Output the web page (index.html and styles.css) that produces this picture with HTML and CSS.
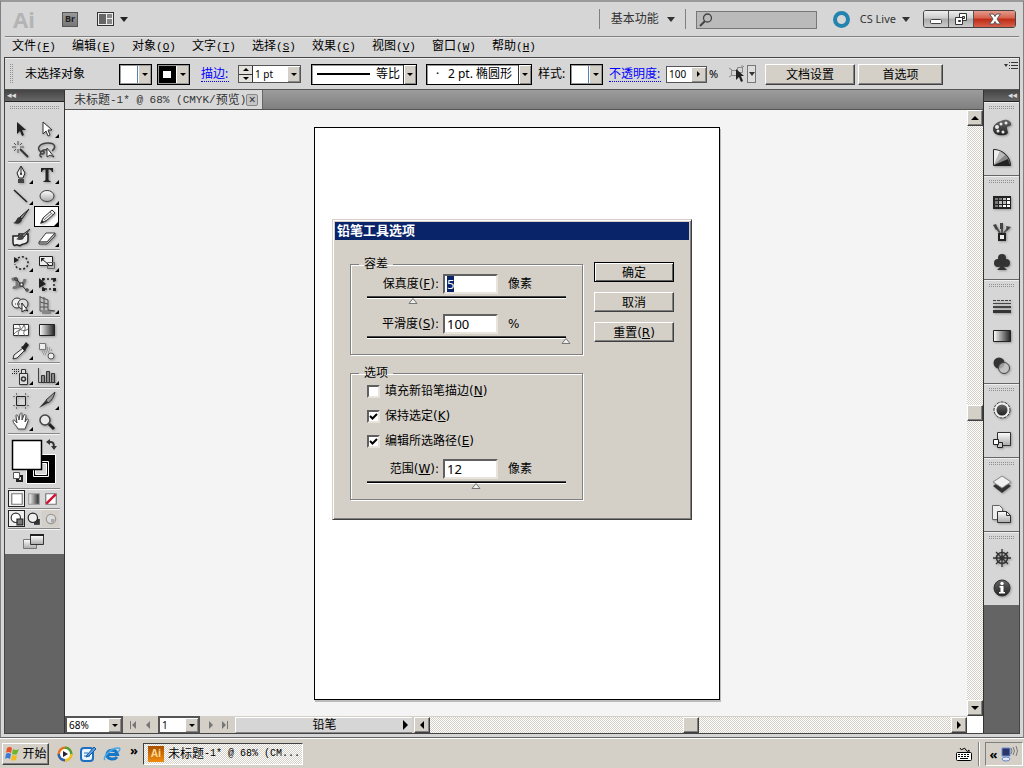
FILE: index.html
```html
<!DOCTYPE html>
<html lang="zh-CN">
<head>
    <meta charset="UTF-8">
    <meta name="viewport" content="width=device-width, initial-scale=1.0">
    <title>未标题-1* @ 68% (CMYK/预览)</title>
    <link rel="stylesheet" href="styles.css">
</head>
<body>

<!-- Shared gradients -->
<svg class="defs" width="0" height="0">
    <defs>
        <linearGradient id="fade" x1="0" y1="0" x2="1" y2="0"><stop offset="0" stop-color="#fff"/><stop offset="1" stop-color="#222"/></linearGradient>
        <linearGradient id="fadeDown" x1="0" y1="0" x2="0" y2="1"><stop offset="0" stop-color="#fff"/><stop offset="1" stop-color="#aaa"/></linearGradient>
        <linearGradient id="dark" x1="0" y1="0" x2="0" y2="1"><stop offset="0" stop-color="#666"/><stop offset="1" stop-color="#222"/></linearGradient>
    </defs>
</svg>

<div class="window">
    <header class="app-bar">
        <span class="app-logo">Ai</span>
        <button class="bridge-btn" type="button">Br</button>
        <button class="arrange-btn" type="button" aria-label="排列文档">
            <svg width="32" height="16" viewBox="0 0 32 16"><rect x="1.500" y="1.500" width="16" height="13" fill="#eee" stroke="#333"/><rect x="3" y="3" width="7" height="10" fill="#666"/><rect x="11" y="3" width="5" height="4" fill="#888"/><rect x="11" y="8" width="5" height="5" fill="#888"/><path d="M24 6h8l-4 5z" fill="#222"/></svg>
        </button>
        <div class="app-right">
            <button class="workspace-btn" type="button">基本功能 <i class="caret"></i></button>
            <label class="search">
                <svg width="14" height="14" viewBox="0 0 14 14"><circle cx="8.500" cy="5" r="4" fill="none" stroke="#444" stroke-width="1.300"/><path d="M6 8L1 13" stroke="#444" stroke-width="2"/></svg>
                <input type="text" aria-label="搜索">
            </label>
            <span class="live-ring"></span>
            <button class="live-btn" type="button">CS Live <i class="caret"></i></button>
            <div class="window-btns">
                <button type="button" aria-label="最小化"><svg width="14" height="14" viewBox="0 0 14 14"><rect x="1.500" y="7.500" width="11" height="4" rx="1" fill="#fff" stroke="#444"/></svg></button>
                <button type="button" aria-label="还原"><svg width="14" height="14" viewBox="0 0 14 14"><path d="M5.500 1.500h7v7h-7z" fill="#fff" stroke="#333"/><path d="M8.500 4.500h2v2h-2z" fill="#aaa" stroke="#333"/><path d="M1.500 5.500h7v7h-7z" fill="#fff" stroke="#333"/><path d="M4.500 8.500h2v1h-2z" fill="#aaa" stroke="#333"/></svg></button>
                <button class="close" type="button" aria-label="关闭"><svg width="14" height="14" viewBox="0 0 14 14"><path d="M1.500 2h4l1.500 2.500 1.500-2.500h4l-3.500 5 3.500 5h-4l-1.500-2.500-1.500 2.500h-4l3.500-5z" fill="#fff" stroke="#555"/></svg></button>
            </div>
        </div>
    </header>

    <nav class="menu">
        <a href="#">文件<span>(<u>F</u>)</span></a>
        <a href="#">编辑<span>(<u>E</u>)</span></a>
        <a href="#">对象<span>(<u>O</u>)</span></a>
        <a href="#">文字<span>(<u>T</u>)</span></a>
        <a href="#">选择<span>(<u>S</u>)</span></a>
        <a href="#">效果<span>(<u>C</u>)</span></a>
        <a href="#">视图<span>(<u>V</u>)</span></a>
        <a href="#">窗口<span>(<u>W</u>)</span></a>
        <a href="#">帮助<span>(<u>H</u>)</span></a>
    </nav>

    <div class="shell">
        <!-- Control bar -->
        <div class="control-bar">
            <span class="grip-v"></span>
            <span class="selection">未选择对象</span>
            <button class="swatch" type="button" aria-label="填色"><span class="chip"></span><span class="drop"></span></button>
            <button class="swatch" type="button" aria-label="描边颜色"><span class="chip black"></span><span class="drop"></span></button>
            <a class="panel-link stroke-link" href="#">描边:</a>
            <div class="weight">
                <div class="spin"><button type="button" aria-label="增加"><i class="up"></i></button><button type="button" aria-label="减少"><i class="down"></i></button></div>
                <input type="text" value="1 pt" aria-label="描边粗细">
                <button class="drop" type="button" aria-label="粗细列表"></button>
            </div>
            <button class="combo profile" type="button"><span class="line"></span><span>等比</span><span class="drop"></span></button>
            <button class="combo brush" type="button"><span class="dot">·</span><span>2 pt. 椭圆形</span><span class="drop"></span></button>
            <span class="style-label">样式:</span>
            <button class="swatch" type="button" aria-label="样式"><span class="chip"></span><span class="drop"></span></button>
            <a class="panel-link opacity-link" href="#">不透明度:</a>
            <div class="opacity">
                <input type="text" value="100" aria-label="不透明度">
                <button class="drop side" type="button" aria-label="不透明度滑块"></button>
            </div>
            <span class="percent">%</span>
            <button class="similar" type="button" aria-label="选择类似的对象">
                <svg width="16" height="18" viewBox="0 0 16 18"><path d="M0 3l3 2m-3 7l3-2M13 0v2M15 1l-2 2M8.500 2.500h5v5h-5zM2.500 5.500h5v5h-5z" fill="none" stroke="#888"/><path d="M7 4v11l3-3 2 5 2-1-2-5h3z" fill="#222"/></svg>
            </button>
            <button class="similar-drop" type="button" aria-label="更多"></button>
            <button class="push setup" type="button">文档设置</button>
            <button class="push prefs" type="button">首选项</button>
            <button class="bar-menu" type="button" aria-label="面板菜单">
                <svg width="14" height="10" viewBox="0 0 14 10"><path d="M0 3h4l-2 3z" fill="#333"/><path d="M5 1.500h1m1 0h7M5 4.500h1m1 0h7M5 7.500h1m1 0h7" stroke="#333"/></svg>
            </button>
        </div>

        <div class="workspace">
            <!-- Tools -->
            <aside class="tools">
                <div class="panel-head">◂◂</div>
                <div class="tools-panel">
                    <div class="grip"></div>
                    <div class="tool-group">
                        <button type="button" aria-label="选择"><svg viewBox="0 0 20 20"><path d="M6 3v12l3-3 2 5 2-1-2-5h4z" fill="#222"/></svg></button>
                        <button class="more" type="button" aria-label="直接选择"><svg viewBox="0 0 20 20"><path d="M6 3v12l3-3 2 5 2-1-2-5h4z" fill="#fff" stroke="#333"/></svg></button>
                        <button type="button" aria-label="魔棒"><svg viewBox="0 0 20 20"><path d="M9 9l8 8" stroke="#333" stroke-width="2"/><path d="M7 1v4M7 9v4M1 7h4M9 7h4M3 3l2 2M9 5l2-2M3 11l2-2" stroke="#555"/></svg></button>
                        <button type="button" aria-label="套索"><svg viewBox="0 0 20 20"><path d="M4 12c-6-4 0-9 7-9 8 0 8 5 4 8M4 12c3-3 5 2 1 2-3 0-1-5 5-4M4 13c-2 2-1 4 1 4" fill="none" stroke="#444" stroke-width="1.500"/><path d="M10 8v9l3-2 4 2z" fill="#fff" stroke="#333"/></svg></button>
                    </div>
                    <div class="tool-group">
                        <button class="more" type="button" aria-label="钢笔"><svg viewBox="0 0 20 20"><path d="M10 1l4 7-2 5h-4l-2-5z" fill="#eee" stroke="#222"/><path d="M10 2v7" stroke="#222"/><circle cx="10" cy="9" r="1" fill="#222"/><path d="M7 14h6v4h-6z" fill="#444"/></svg></button>
                        <button class="more" type="button" aria-label="文字"><svg viewBox="0 0 20 20"><path d="M4 3h12v4h-1q-.500-2.500-2.500-2.500h-1v10q0 1.500 2 1.500v1h-7v-1q2 0 2-1.500v-10h-1q-2 0-2.500 2.500h-1z" fill="#222"/></svg></button>
                        <button class="more" type="button" aria-label="直线段"><svg viewBox="0 0 20 20"><path d="M3 4l13 12" stroke="#222" stroke-width="1.500"/></svg></button>
                        <button class="more" type="button" aria-label="椭圆"><svg viewBox="0 0 20 20"><ellipse cx="10" cy="10" rx="7" ry="5.500" fill="url(#fadeDown)" stroke="#444"/></svg></button>
                        <button type="button" aria-label="画笔"><svg viewBox="0 0 20 20"><path d="M18 2l-9 8 2 2z" fill="#888" stroke="#222"/><path d="M9 10c-4 0-3 5-7 6 5 2 9 0 9-4z" fill="#333"/></svg></button>
                        <button class="more active" type="button" aria-label="铅笔"><svg viewBox="0 0 20 20"><path d="M15 3l3 3-9 8-5 2 2-5z" fill="#eee" stroke="#333"/><path d="M6 11l3 3M13 5l3 3M8 12l7-6" stroke="#777"/><path d="M3 17l2-4 2 2z" fill="#222"/></svg></button>
                        <button type="button" aria-label="斑点画笔"><svg viewBox="0 0 20 20"><path d="M2 8h6v-2h9v6c0 5-5 3-7 5s-3-1-5 0-3 0-3-3z" fill="#eee" stroke="#222" stroke-width="1.500"/><path d="M19 1l-8 6 2 2z" fill="#888" stroke="#333"/><path d="M11 7c-4-1-3 4-6 4 4 2 8 1 8-2z" fill="#444"/></svg></button>
                        <button class="more" type="button" aria-label="橡皮擦"><svg viewBox="0 0 20 20"><path d="M9 5h9l-8 9h-8z" fill="#fff" stroke="#444"/><path d="M18 5v3l-8 8h-8v-2h8z" fill="#bbb" stroke="#444"/></svg></button>
                    </div>
                    <div class="tool-group">
                        <button class="more" type="button" aria-label="旋转"><svg viewBox="0 0 20 20"><path d="M7 5c5-3 10 0 10 5 0 8-12 8-13 1" fill="none" stroke="#222" stroke-width="1.500" stroke-dasharray="2 2"/><path d="M3 4v6l5-3z" fill="#222"/></svg></button>
                        <button class="more" type="button" aria-label="比例缩放"><svg viewBox="0 0 20 20"><path d="M2.500 3.500h13v9h-13z" fill="#eee" stroke="#222"/><path d="M10.500 9.500h7v6h-7z" fill="none" stroke="#666"/><path d="M5 6l7 6" stroke="#222"/><path d="M4 5h4l-4 4z" fill="#222"/></svg></button>
                        <button class="more" type="button" aria-label="宽度"><svg viewBox="0 0 20 20"><path d="M1 6c4-3 6 1 5 4s6 4 8-5M2 13c3 2 6-1 8-3" fill="none" stroke="#777" stroke-width="3"/><path d="M5 5l11 12" stroke="#222"/><path d="M4 4h2v2h-2zM9 9h3v3h-3zM15 15h2v2h-2z" fill="#fff" stroke="#222"/></svg></button>
                        <button type="button" aria-label="自由变换"><svg viewBox="0 0 20 20"><path d="M6 5h11v10h-11z" fill="none" stroke="#222" stroke-width="1.500" stroke-dasharray="2 2"/><path d="M5 4h2v2h-2zM16 4h3v3h-3zM16 14h3v3h-3zM5 14h3v3h-3zM2 4v10l7-4z" fill="#222"/></svg></button>
                        <button class="more" type="button" aria-label="形状生成器"><svg viewBox="0 0 20 20"><circle cx="6" cy="8" r="5" fill="#eee" stroke="#333"/><circle cx="12" cy="9" r="5" fill="#ddd" stroke="#333"/><path d="M4 9h8" stroke="#333" stroke-dasharray="1 1"/><path d="M11 8v9l3-2 3 1z" fill="#fff" stroke="#222"/></svg></button>
                        <button class="more" type="button" aria-label="透视网格"><svg viewBox="0 0 20 20"><path d="M3 1v15M7 2v13M11 5v10M3 2l8 3M3 7l8 2M3 12h8M3 16h14M5 18h9M11 15l7 1" fill="none" stroke="#555"/></svg></button>
                    </div>
                    <div class="tool-group">
                        <button type="button" aria-label="网格"><svg viewBox="0 0 20 20"><path d="M2.500 4.500h15v11h-15z" fill="#fff" stroke="#333"/><path d="M3 9c6-3 8 5 14 0M8 5c4 5-3 6 0 11M13 5c4 6-4 7 2 11M3 14c4-5 7-2 10-9" fill="none" stroke="#666"/></svg></button>
                        <button type="button" aria-label="渐变"><svg viewBox="0 0 20 20"><path d="M2.500 4.500h15v11h-15z" fill="url(#fade)" stroke="#222"/></svg></button>
                        <button class="more" type="button" aria-label="吸管"><svg viewBox="0 0 20 20"><path d="M12 7l2 2-8 8-4 1 1-4z" fill="#eee" stroke="#333"/><path d="M10 6l2-1 3-4 3 3-3 4-1 3z" fill="#222"/></svg></button>
                        <button type="button" aria-label="混合"><svg viewBox="0 0 20 20"><path d="M2.500 2.500h6v6h-6z" fill="#eee" stroke="#777"/><circle cx="14" cy="15" r="3" fill="#eee" stroke="#555"/><path d="M5 11h8M6 13h4M10 9h5M10 7h3" stroke="#777" stroke-dasharray="1 1"/></svg></button>
                    </div>
                    <div class="tool-group">
                        <button class="more" type="button" aria-label="符号喷枪"><svg viewBox="0 0 20 20"><path d="M8.500 7.500h8v11h-8zM10.500 3.500h4v4h-4z" fill="#ddd" stroke="#333"/><circle cx="12.500" cy="13" r="2" fill="none" stroke="#333" stroke-width="1.500"/><path d="M1 3.500h8M3 5.500h6M1 7.500h5" stroke="#222" stroke-dasharray="1 1"/></svg></button>
                        <button class="more" type="button" aria-label="柱形图"><svg viewBox="0 0 20 20"><path d="M1.500 2v14.500h17" fill="none" stroke="#444"/><path d="M4.500 9.500h3v7h-3zM9.500 5.500h3v11h-3zM14.500 7.500h3v9h-3z" fill="#888" stroke="#333"/></svg></button>
                    </div>
                    <div class="tool-group">
                        <button type="button" aria-label="画板"><svg viewBox="0 0 20 20"><path d="M5.500 5.500h9v9h-9z" fill="none" stroke="#222"/><path d="M5.500 2v2M14.500 2v2M5.500 16v2M14.500 16v2M2 5.500h2M16 5.500h2M2 14.500h2M16 14.500h2" stroke="#777"/></svg></button>
                        <button class="more" type="button" aria-label="切片"><svg viewBox="0 0 20 20"><path d="M18 1l-9 8 2 3c4-2 6-7 7-11z" fill="#999" stroke="#333"/><path d="M9 9l2 3-9 5z" fill="#333"/></svg></button>
                        <button class="more" type="button" aria-label="抓手"><svg viewBox="0 0 20 20"><path d="M7 17c-1-3-5-6-5-8s2-1 4 2l-1-7c0-2 2-2 3 4l1-6c1-2 2-1 2 0v6l2-5c1-1 2 0 2 1l-1 6 2-3c1 0 2 1 1 2l-3 8z" fill="#fff" stroke="#444"/></svg></button>
                        <button type="button" aria-label="缩放"><svg viewBox="0 0 20 20"><circle cx="8" cy="8" r="5" fill="#e8e8e8" stroke="#444" stroke-width="1.500"/><path d="M12 12l5 5" stroke="#222" stroke-width="3"/></svg></button>
                    </div>
                    <div class="tool-colors">
                        <svg width="52" height="52" viewBox="0 0 52 52">
                            <path d="M18.500 18.500h29v29h-29z" fill="#000" stroke="#fff"/><path d="M25.500 25.500h15v15h-15z" fill="#000" stroke="#fff"/><path d="M27.500 27.500h11v11h-11z" fill="#d6d6d6" stroke="#fff"/>
                            <path d="M4.500 4.500h29v29h-29z" fill="#fff" stroke="#000" stroke-width="1.500"/>
                            <path d="M40 6h3q3 0 3 5" fill="none" stroke="#333" stroke-width="2"/><path d="M38 6l4-3v6zM43 10h6l-3 4z" fill="#333"/>
                            <path d="M8 39h7v7h-7z" fill="#222"/><path d="M11 41h2v3h-2z" fill="#ddd"/><path d="M5.500 36.500h6v6h-6z" fill="#fff" stroke="#555"/>
                        </svg>
                    </div>
                    <div class="tool-modes">
                        <button class="on" type="button" aria-label="颜色"><svg viewBox="0 0 12 12"><path d="M1.500 1.500h9v9h-9z" fill="#fff" stroke="#777"/></svg></button>
                        <button type="button" aria-label="渐变"><svg viewBox="0 0 12 12"><path d="M1.500 1.500h9v9h-9z" fill="url(#fade)" stroke="#999"/></svg></button>
                        <button type="button" aria-label="无"><svg viewBox="0 0 12 12"><path d="M1.500 1.500h9v9h-9z" fill="#fff" stroke="#777"/><path d="M2 10l8-8" stroke="#d01030" stroke-width="2"/></svg></button>
                    </div>
                    <div class="tool-modes">
                        <button class="on" type="button" aria-label="正常绘图"><svg viewBox="0 0 12 12"><circle cx="5" cy="5" r="4" fill="#fff" stroke="#333"/><path d="M6 6h5v5h-5z" fill="#777" stroke="#222"/></svg></button>
                        <button type="button" aria-label="背面绘图"><svg viewBox="0 0 12 12"><path d="M6 6h5v5h-5z" fill="#333"/><circle cx="5" cy="5" r="4" fill="#eee" stroke="#222"/></svg></button>
                        <button class="off" type="button" aria-label="内部绘图"><svg viewBox="0 0 12 12"><circle cx="6" cy="6" r="4" fill="#ddd" stroke="#999"/><path d="M6 6h3v3h-3z" fill="#aaa"/></svg></button>
                    </div>
                    <div class="screen-mode">
                        <button type="button" aria-label="屏幕模式"><svg width="24" height="18" viewBox="0 0 24 18"><path d="M1.500 6.500h13v9h-13z" fill="url(#fadeDown)" stroke="#777"/><path d="M8.500 2.500h13v9h-13z" fill="url(#fadeDown)" stroke="#333"/><path d="M8 2h14" stroke="#222" stroke-width="2"/></svg></button>
                    </div>
                </div>
            </aside>

            <!-- Document -->
            <main class="document">
                <div class="tabs">
                    <div class="tab">未标题<span>-1* @ 68% (CMYK/</span>预览<span>)</span><button type="button" aria-label="关闭文档">×</button></div>
                </div>
                <div class="view">
                    <div class="canvas"><div class="artboard"></div></div>
                    <div class="scroll-y">
                        <button class="scroll-btn" type="button" aria-label="向上"><i class="up big"></i></button>
                        <span class="thumb"></span>
                        <button class="scroll-btn" type="button" aria-label="向下"><i class="down big"></i></button>
                    </div>
                </div>
                <div class="status">
                    <div class="field zoom"><input type="text" value="68%" aria-label="缩放"><button class="drop" type="button" aria-label="缩放列表"></button></div>
                    <button class="nav" type="button" aria-label="首项"><svg width="9" height="8" viewBox="0 0 9 8"><path d="M1 0h1v8h-1zM7 0v8l-4-4z" fill="#777"/></svg></button>
                    <button class="nav" type="button" aria-label="上一项"><svg width="9" height="8" viewBox="0 0 9 8"><path d="M6 0v8l-4-4z" fill="#777"/></svg></button>
                    <div class="field page"><input type="text" value="1" aria-label="画板"><button class="drop" type="button" aria-label="画板列表"></button></div>
                    <button class="nav" type="button" aria-label="下一项"><svg width="9" height="8" viewBox="0 0 9 8"><path d="M3 0v8l4-4z" fill="#777"/></svg></button>
                    <button class="nav" type="button" aria-label="末项"><svg width="9" height="8" viewBox="0 0 9 8"><path d="M1 0v8l4-4zM6 0h1v8h-1z" fill="#777"/></svg></button>
                    <button class="current-tool" type="button"><span>铅笔</span><i class="right big"></i></button>
                    <div class="scroll-x">
                        <button class="scroll-btn" type="button" aria-label="向左"><i class="left"></i></button>
                        <span class="thumb"></span>
                        <button class="scroll-btn" type="button" aria-label="向右"><i class="right"></i></button>
                    </div>
                    <span class="corner"></span>
                </div>
            </main>

            <!-- Panel dock -->
            <aside class="dock">
                <div class="panel-head right-head">◂◂</div>
                <div class="dock-group">
                    <div class="grip"></div>
                    <button type="button" aria-label="颜色"><svg viewBox="0 0 20 20"><path d="M9 3c5-3 11 0 10 4-1 2-4 0-4 3s3 5-2 7c-5 1-12 0-12-6 0-4 4-7 8-8z" fill="url(#dark)"/><g fill="#e8e8e8"><circle cx="5" cy="9" r="2"/><circle cx="9" cy="6" r="1.500"/><circle cx="14" cy="5" r="1.500"/><circle cx="6" cy="13" r="1.500"/><circle cx="11" cy="14" r="1.500"/></g></svg></button>
                    <button type="button" aria-label="颜色参考"><svg viewBox="0 0 20 20"><path d="M1.500 1.500v16h17c0-9-8-16-17-16z" fill="#888" stroke="#222"/><path d="M2 17v-15l6 1z" fill="#eee"/><path d="M2 17l6-14 5 4z" fill="#bbb"/><path d="M2 17l14-6 2 6z" fill="#222"/></svg></button>
                </div>
                <div class="dock-group">
                    <div class="grip"></div>
                    <button type="button" aria-label="色板"><svg viewBox="0 0 20 20"><path d="M1 4h18v13h-18z" fill="#222"/><g fill="#777"><path d="M3 6h3v2h-3zM7 6h3v2h-3zM3 9h3v3h-3zM3 13h3v2h-3z"/></g><g fill="#bbb"><path d="M11 6h3v2h-3zM7 9h3v3h-3zM11 9h3v3h-3zM7 13h3v2h-3z"/></g><path d="M15 6h3v2h-3zM15 9h3v3h-3zM11 13h3v2h-3zM15 13h3v2h-3z" fill="#fff"/></svg></button>
                    <button type="button" aria-label="画笔"><svg viewBox="0 0 20 20"><path d="M8 11L4 5M10 11V4M12 11l4-5" stroke="#555" stroke-width="2"/><path d="M1 3l3-1 2 5-2 1zM8 1h3v6h-3zM14 4l5 1-4 4z" fill="#444"/><path d="M7 12h6v6h-6z" fill="#eee" stroke="#222" stroke-width="2"/></svg></button>
                    <button type="button" aria-label="符号"><svg viewBox="0 0 20 20"><g fill="#333"><circle cx="10" cy="6" r="4"/><circle cx="6" cy="11" r="4"/><circle cx="14" cy="11" r="4"/><path d="M9 9h2l1 6 3 3h-10l3-3z"/></g></svg></button>
                </div>
                <div class="dock-group">
                    <div class="grip"></div>
                    <button type="button" aria-label="描边"><svg viewBox="0 0 20 20"><path d="M1 4.500h18" stroke="#444" stroke-dasharray="3 1"/><path d="M1 7.500h18" stroke="#444"/><path d="M1 11h18" stroke="#444" stroke-width="2"/><path d="M1 15.500h18" stroke="#333" stroke-width="3"/></svg></button>
                    <button type="button" aria-label="渐变"><svg viewBox="0 0 20 20"><path d="M1.500 4.500h17v11h-17z" fill="url(#fade)" stroke="#222"/></svg></button>
                    <button type="button" aria-label="透明度"><svg viewBox="0 0 20 20"><circle cx="7" cy="7" r="5.500" fill="#333"/><circle cx="12" cy="12" r="5.500" fill="#ccc" fill-opacity=".7" stroke="#444"/></svg></button>
                </div>
                <div class="dock-group">
                    <div class="grip"></div>
                    <button type="button" aria-label="外观"><svg viewBox="0 0 20 20"><circle cx="10" cy="10" r="8" fill="#eee" stroke="#333" stroke-dasharray="3 1"/><circle cx="10" cy="10" r="5.500" fill="url(#dark)"/></svg></button>
                    <button type="button" aria-label="图形样式"><svg viewBox="0 0 20 20"><path d="M5.500 2.500h13v13h-13z" fill="url(#fadeDown)" stroke="#333"/><path d="M5.500 12.500h5v5h-5z" fill="#ccc" stroke="#222"/><path d="M1.500 9.500h5v5h-5z" fill="#fff" stroke="#222"/></svg></button>
                </div>
                <div class="dock-group">
                    <div class="grip"></div>
                    <button type="button" aria-label="图层"><svg viewBox="0 0 20 20"><path d="M1 12l9-6 9 6-9 7z" fill="#333"/><path d="M1 8l9-6 9 6-9 6z" fill="#f0f0f0" stroke="#888"/></svg></button>
                    <button type="button" aria-label="画板"><svg viewBox="0 0 20 20"><path d="M.500 1.500h7l3 3v11h-10z" fill="#eee" stroke="#666"/><path d="M5.500 7.500h9l4 4v7h-13z" fill="url(#fadeDown)" stroke="#333"/><path d="M14.500 7.500v4h4" fill="none" stroke="#333"/></svg></button>
                </div>
                <div class="dock-group">
                    <div class="grip"></div>
                    <button type="button" aria-label="导航器"><svg viewBox="0 0 20 20"><circle cx="10" cy="10" r="5.500" fill="none" stroke="#333" stroke-width="1.500"/><circle cx="10" cy="10" r="2" fill="none" stroke="#333"/><path d="M10 1v18M1 10h18M4 4l12 12M4 16L16 4" stroke="#333" stroke-width="1.300"/></svg></button>
                    <button type="button" aria-label="信息"><svg viewBox="0 0 20 20"><circle cx="10" cy="10" r="8" fill="url(#dark)" stroke="#333"/><circle cx="10" cy="5.500" r="1.700" fill="#fff"/><path d="M7.500 8h4v6h1.500v1.500h-6v-1.500h1.500v-4.500h-1z" fill="#fff"/></svg></button>
                </div>
            </aside>
        </div>
    </div>
</div>

<!-- Pencil tool options -->
<form class="dialog" role="dialog" aria-label="铅笔工具选项" onsubmit="return false">
    <h1>铅笔工具选项</h1>
    <div class="dialog-body">
        <div class="options">
            <fieldset>
                <legend>容差</legend>
                <div class="row">
                    <label for="fidelity">保真度(<u>F</u>):</label>
                    <input type="text" id="fidelity" value="5" autofocus>
                    <span>像素</span>
                </div>
                <input type="range" min="0" max="100" value="23" aria-label="保真度">
                <div class="row">
                    <label for="smoothness">平滑度(<u>S</u>):</label>
                    <input type="text" id="smoothness" value="100">
                    <span>%</span>
                </div>
                <input type="range" min="0" max="100" value="100" aria-label="平滑度">
            </fieldset>
            <fieldset>
                <legend>选项</legend>
                <div class="check"><input type="checkbox" id="fill-new"><label for="fill-new">填充新铅笔描边(<u>N</u>)</label></div>
                <div class="check"><input type="checkbox" id="keep" checked><label for="keep">保持选定(<u>K</u>)</label></div>
                <div class="check"><input type="checkbox" id="edit-path" checked><label for="edit-path">编辑所选路径(<u>E</u>)</label></div>
                <div class="row">
                    <label for="within">范围(<u>W</u>):</label>
                    <input type="text" id="within" value="12">
                    <span>像素</span>
                </div>
                <input type="range" min="0" max="100" value="55" aria-label="范围">
            </fieldset>
        </div>
        <div class="dialog-btns">
            <button class="push default" type="submit">确定</button>
            <button class="push" type="button">取消</button>
            <button class="push" type="reset">重置(<u>R</u>)</button>
        </div>
    </div>
</form>

<!-- Taskbar -->
<footer class="taskbar">
    <button class="start" type="button">
        <svg width="16" height="16" viewBox="0 0 16 16"><path d="M3 2q3-2 5 0l-1 5q-3-2-5 0z" fill="#e8512a"/><path d="M9 3q3 2 6 0l-2 5q-3 1-5 0z" fill="#6cb52d"/><path d="M2 8q2-2 5 0l-1 5q-3-2-5 0z" fill="#3a7bd5"/><path d="M8 9q2 1 5 0l-1 5q-3 1-5 0z" fill="#f5bc1c"/></svg>
        开始
    </button>
    <div class="quick">
        <a href="#" aria-label="媒体播放器"><svg width="16" height="16" viewBox="0 0 16 16"><circle cx="8" cy="8" r="7.500" fill="#e8731e"/><path d="M8 .500a7.500 7.500 0 0 1 7.500 7.500h-7.500z" fill="#4ca437"/><path d="M15.500 8a7.500 7.500 0 0 1-7.500 7.500v-7.500z" fill="#f2c21c"/><path d="M.500 8a7.500 7.500 0 0 0 7.500 7.500v-7.500z" fill="#2b62b8"/><circle cx="8" cy="8" r="5" fill="#fff"/><path d="M6 5v6l5-3z" fill="#223"/></svg></a>
        <a href="#" aria-label="显示桌面"><svg width="16" height="16" viewBox="0 0 16 16"><rect x="1" y="2" width="12" height="13" rx="3" fill="#e8f4ff" stroke="#1f6fc0" stroke-width="2"/><path d="M4 7h4M4 10h6" stroke="#1f6fc0"/><path d="M7 9l7-8 2 2-7 7-3 1z" fill="#5aa0e0" stroke="#15589c"/></svg></a>
        <a href="#" aria-label="浏览器"><svg width="18" height="16" viewBox="0 0 18 16"><path d="M14 11c-2 3-10 3-10-2.500s9-6 10.500 0h-9" fill="none" stroke="#1878c8" stroke-width="3"/><path d="M2 14c-3-2 6-13 14-12 2 1 0 3-1 4" fill="none" stroke="#48a8ea" stroke-width="1.500"/></svg></a>
        <span class="chevrons">»</span>
    </div>
    <button class="task" type="button"><span class="task-icon">Ai</span>未标题<span class="mono">-1* @ 68% (CM...</span></button>
    <div class="tray-left">
        <svg width="18" height="16" viewBox="0 0 18 16"><path d="M5 2q1 3 3 1t3 1 3 0v2" fill="none" stroke="#000"/><rect x="1.500" y="6.500" width="15" height="8" rx="1" fill="#fff" stroke="#000"/><path d="M3 8.500h12M3 10.500h12" stroke="#000" stroke-dasharray="2 1"/><path d="M5 12.500h8" stroke="#000"/></svg>
    </div>
    <div class="tray">
        <span class="chevrons">«</span>
        <svg width="18" height="16" viewBox="0 0 18 16"><path d="M2 2h8v8h-8z" fill="#2c3468" stroke="#6c8fd8"/><ellipse cx="6" cy="13" rx="4" ry="2" fill="#dde8ff" stroke="#6a86c0"/><path d="M11 2q2 3 0 6M13 1q3 4 0 8M16 0q3 5 0 10" fill="none" stroke="#777"/></svg>
    </div>
</footer>

<script>
    // the first field opens with its value selected
    document.getElementById('fidelity').select();
</script>

</body>
</html>
```
FILE: styles.css
```css
* {
    box-sizing: border-box;
}

body {
    margin: 0;
    min-height: 100vh;
    display: flex;
    flex-direction: column;
    position: relative;
    font: 12px/16px "Noto Sans", "Noto Sans CJK SC", sans-serif;
    color: #000;
    background: #d4d0c8;
}

button, input {
    font: inherit;
    color: inherit;
    margin: 0;
    padding: 0;
    border: 0;
    border-radius: 0;
    background: none;
    outline: none;
}

button {
    display: flex;
    align-items: center;
    justify-content: center;
    white-space: nowrap;
}

a {
    color: inherit;
    text-decoration: none;
}

svg {
    display: block;
    flex: none;
}

.defs {
    position: absolute;
}

.window {
    flex: 1;
    display: flex;
    flex-direction: column;
    background: #d6d6d6;
    border: 1px solid #808080;
    border-top: 2px solid #9a9a9a;
    border-bottom-color: #666;
}

/* little triangles */
.up, .down, .left, .right, .caret {
    display: inline-block;
    width: 0;
    height: 0;
    border: 3px solid transparent;
}

.up {
    border-top: 0;
    border-bottom-color: #000;
}

.down {
    border-bottom: 0;
    border-top-color: #000;
}

.up.big, .down.big {
    border-width: 4px;
}

.up.big {
    border-top: 0;
}

.down.big {
    border-bottom: 0;
}

.left {
    border-width: 4px;
    border-left: 0;
    border-right-color: #000;
}

.right {
    border-width: 4px;
    border-right: 0;
    border-left-color: #000;
}

.right.big {
    border-width: 5px;
    border-right: 0;
}

.caret {
    border-width: 4px;
    border-top: 5px solid #333;
    border-bottom: 0;
    margin-left: 6px;
}

/* top bar */
.app-bar {
    height: 35px;
    margin: 0 4px;
    padding: 0 3px 0 8px;
    display: flex;
    align-items: center;
    border-bottom: 1px solid #808080;
    box-shadow: 0 1px #e8e8e8;
}

.app-logo {
    width: 49px;
    font: bold 22px/30px "Open Sans", sans-serif;
    color: #b4b4b4;
}

.bridge-btn {
    width: 16px;
    height: 15px;
    margin-right: 18px;
    font-size: 9px;
    font-weight: bold;
    color: #222;
    background: linear-gradient(#999, #777);
    border: 1px solid #555;
}

.app-right {
    margin-left: auto;
    display: flex;
    align-items: center;
    color: #333;
}

.workspace-btn {
    height: 20px;
    padding: 0 10px 0 11px;
    border-left: 1px solid #808080;
    border-right: 1px solid #808080;
}

.workspace-btn .caret {
    margin-left: 8px;
}

.search {
    width: 121px;
    height: 18px;
    margin: 2px 16px 0 10px;
    padding: 0 2px;
    display: flex;
    align-items: center;
    background: #bababa;
    border: 1px solid #777;
}

.search input {
    width: 100%;
}

.live-ring {
    width: 17px;
    height: 17px;
    border: 4px solid #2484b0;
    border-radius: 50%;
}

.live-btn {
    margin: 0 13px 0 10px;
    font-size: 11px;
}

.window-btns {
    display: flex;
    height: 18px;
    border: 1px solid #444;
    border-radius: 3px;
    overflow: hidden;
}

.window-btns button {
    width: 25px;
    background: linear-gradient(#eee, #ccc 45%, #aaa 50%, #ccc);
    border-right: 1px solid #555;
}

.window-btns .close {
    width: 41px;
    border: 0;
    background: linear-gradient(#e69a8c, #d4604c 45%, #bc2a14 50%, #d8604c);
}

.menu {
    height: 20px;
    padding: 0 0 2px 11px;
    display: flex;
    align-items: center;
}

.menu a {
    width: 60px;
}

.menu span, .tab span {
    font: 11px/16px "Liberation Mono", monospace;
}

.mono {
    font: 10px/16px "Liberation Mono", monospace;
}

.shell {
    flex: 1;
    display: flex;
    flex-direction: column;
    margin: 0 3px 3px;
    border: 1px solid #444;
}

/* control bar */
.control-bar {
    height: 32px;
    padding-left: 4px;
    display: flex;
    align-items: center;
    border-top: 1px solid #eee;
    border-bottom: 1px solid #555;
}

.grip, .grip-v {
    background: repeating-conic-gradient(#909090 0 25%, #d6d6d6 0 100%) 0 0 / 2px 2px;
}

.grip-v {
    width: 4px;
    height: 20px;
}

.selection {
    width: 94px;
    margin-left: 12px;
}

.swatch {
    width: 33px;
    height: 21px;
    margin-right: 5px;
    align-items: stretch;
    background: #fff;
    border: 1px solid #000;
    outline: 1px solid #999;
    outline-offset: -2px;
}

.swatch .chip {
    flex: 1;
    background: #fff;
    border-right: 1px solid #5580b0;
}

.swatch .chip.black {
    border: 6px solid #000;
    border-width: 6px 5px;
}

.drop {
    width: 13px;
    flex: none;
    display: flex;
    align-items: center;
    justify-content: center;
    background: #d4d0c8;
    box-shadow: inset 1px 1px #fff, inset -1px -1px #888;
}

.drop::after {
    content: "";
    border: 3px solid transparent;
    border-top-color: #000;
    border-bottom: 0;
}

.drop.side::after {
    border: 3px solid transparent;
    border-left-color: #000;
    border-right: 0;
}

.panel-link {
    color: #00f;
    border-bottom: 1px dotted #00f;
    line-height: 14px;
    white-space: nowrap;
}

.stroke-link {
    width: 28px;
    margin-left: 6px;
}

.weight {
    width: 63px;
    height: 18px;
    margin-left: 9px;
    display: flex;
    border: 1px solid #555;
}

.spin {
    width: 14px;
    display: flex;
    flex-direction: column;
    border-right: 1px solid #333;
}

.spin button {
    flex: 1;
    background: #e4e2dc;
}

.spin button + button {
    border-top: 1px solid #333;
}

.weight input, .opacity input, .field input {
    flex: 1;
    min-width: 0;
    padding-left: 2px;
    font-size: 10px;
    background: #fff;
}

.combo {
    width: 106px;
    height: 21px;
    margin-left: 9px;
    align-items: stretch;
    line-height: 18px;
    background: #fff;
    border: 1px solid #000;
    box-shadow: inset 1px 1px #999;
}

.combo .drop {
    margin-left: auto;
    border-left: 1px solid #333;
}

.profile {
    margin-left: 10px;
}

.profile .line {
    width: 53px;
    height: 2px;
    margin: 8px 6px 0 5px;
    background: #000;
}

.brush .dot {
    width: 21px;
    text-align: center;
}

.style-label {
    width: 28px;
    margin: 0 4px 0 6px;
}

.opacity-link {
    width: 52px;
    margin-left: 1px;
}

.opacity {
    width: 41px;
    height: 17px;
    margin-left: 5px;
    display: flex;
    border: 1px solid #555;
}

.opacity .drop {
    width: 15px;
}

.percent {
    width: 22px;
    padding-left: 2px;
    font-size: 11px;
}

.similar-drop {
    width: 9px;
    height: 18px;
    margin: 0 9px 0 2px;
    border: 1px solid #777;
    background: #ddd;
}

.similar-drop::after {
    content: "";
    border: 3px solid transparent;
    border-top: 4px solid #333;
    border-bottom: 0;
}

.push {
    height: 21px;
    padding-top: 2px;
    background: #d4d0c8;
    border: 1px solid;
    border-color: #fff #404040 #404040 #fff;
    box-shadow: inset -1px -1px #808080;
}

.setup {
    width: 90px;
    margin-right: 3px;
}

.prefs {
    width: 85px;
}

.bar-menu {
    align-self: flex-start;
    margin: 2px 1px 0 auto;
}

/* workspace */
.workspace {
    flex: 1;
    display: flex;
    background: #646464;
}

.panel-head {
    height: 12px;
    padding-left: 2px;
    font: 9px/11px "DejaVu Sans", sans-serif;
    color: #ddd;
    background: linear-gradient(#444, #666);
    border-bottom: 1px solid #222;
}

.right-head {
    padding-right: 2px;
    text-align: right;
}

.tools {
    flex: none;
    width: 60px;
    border-right: 1px solid #333;
}

.tools-panel {
    padding: 4px 4px 0 3px;
    background: #d6d6d6;
}

.grip {
    height: 4px;
    margin: 0 0 8px 1px;
}

.tool-group {
    display: grid;
    grid-template-columns: 26px 26px;
    padding-bottom: 1px;
    margin-bottom: 2px;
    border-bottom: 1px solid #888;
    box-shadow: 0 1px #f4f4f4;
}

.tool-group button {
    position: relative;
    height: 21px;
}

.tool-group svg {
    width: 20px;
    height: 20px;
    filter: drop-shadow(1px 1px 1px #999);
}

.tool-group .more::after {
    content: "";
    position: absolute;
    right: 1px;
    bottom: 1px;
    border: 2px solid;
    border-color: transparent #000 #000 transparent;
}

.tool-group .active {
    background: #fff;
    border: 1px solid #000;
    margin-right: 1px;
}

.tool-group .active::after {
    right: 0;
    bottom: 0;
}

.tool-colors {
    height: 53px;
    border-bottom: 1px solid #888;
    box-shadow: 0 1px #f4f4f4;
}

.tool-modes {
    height: 20px;
    display: flex;
    align-items: center;
    border-bottom: 1px solid #888;
    box-shadow: 0 1px #f4f4f4;
}

.tool-modes button {
    width: 17px;
    height: 17px;
    border: 1px solid transparent;
}

.tool-modes svg {
    width: 14px;
    height: 14px;
}

.tool-modes .on {
    background: #eee;
    border-color: #222;
}

.tool-modes .off {
    background: #d4d0c8;
}

.screen-mode {
    height: 25px;
    display: flex;
    align-items: center;
    justify-content: center;
}

/* document */
.document {
    flex: 1;
    min-width: 0;
    display: flex;
    flex-direction: column;
}

.tabs {
    height: 20px;
    background: linear-gradient(#9c9c9c, #808080);
    border-bottom: 1px solid #555;
}

.tab {
    display: inline-flex;
    align-items: center;
    height: 19px;
    padding: 0 4px 0 9px;
    color: #333;
    background: #d8d8d8;
    border-right: 1px solid #666;
    white-space: pre;
}

.tab button {
    width: 12px;
    height: 12px;
    margin-left: 0;
    line-height: 10px;
    border: 1px solid #888;
    border-radius: 2px;
    background: #c4c4c4;
}

.view {
    flex: 1;
    display: flex;
    background: #f4f4f4;
}

.canvas {
    flex: 1;
    display: flex;
    justify-content: center;
    padding: 17px 0 16px 2px;
}

.artboard {
    aspect-ratio: 406 / 573;
    background: #fff;
    border: 1px solid #000;
    box-shadow: 1px 2px #bbb;
}

.scroll-y, .scroll-x {
    display: flex;
    align-items: center;
    justify-content: space-between;
    background: repeating-conic-gradient(#d4d0c8 0 25%, #fff 0 50%) 0 0 / 2px 2px;
}

.scroll-y {
    width: 16px;
    flex-direction: column;
}

.scroll-x {
    flex: 1;
}

.scroll-btn, .thumb {
    width: 16px;
    height: 16px;
    background: #d4d0c8;
    border: 1px solid;
    border-color: #fff #404040 #404040 #fff;
    box-shadow: inset -1px -1px #808080;
}

.status {
    height: 17px;
    display: flex;
    align-items: center;
    background: #d4d0c8;
}

.field {
    height: 17px;
    display: flex;
    border: 2px solid #555;
    border-bottom-width: 1px;
    background: #fff;
}

.zoom {
    width: 58px;
    margin-right: 3px;
}

.page {
    width: 42px;
    margin: 0 3px 0 2px;
}

.nav {
    width: 14px;
    height: 16px;
    margin-right: 1px;
}

.current-tool {
    width: 177px;
    height: 16px;
    margin: 0 2px;
    padding-right: 4px;
    background: #d6d6d6;
    border-top: 1px solid #fff;
    border-left: 1px solid #fff;
    border-bottom: 1px solid #888;
}

.current-tool span {
    flex: 1;
    padding-left: 10px;
}

.corner {
    width: 16px;
    height: 17px;
    background: #fff;
}

/* dock */
.dock {
    flex: none;
    width: 36px;
    border-left: 1px solid #333;
}

.dock-group {
    padding: 3px 0 2px;
    background: #d6d6d6;
    border-top: 1px solid #eee;
    border-bottom: 1px solid #666;
}

.dock-group .grip {
    margin: 0 4px 3px;
}

.dock-group button {
    width: 100%;
    height: 30px;
}

.dock-group svg {
    width: 20px;
    height: 20px;
    filter: drop-shadow(1px 1px 1px #999);
}

/* dialog */
.dialog {
    position: absolute;
    top: 219px;
    left: calc(50% - 180px);
    width: 360px;
    padding: 2px;
    font-family: "DejaVu Sans", "Noto Sans CJK SC", sans-serif;
    background: #d4d0c8;
    border: 1px solid;
    border-color: #d4d0c8 #404040 #404040 #d4d0c8;
    box-shadow: inset 1px 1px #fff, inset -1px -1px #808080;
}

.dialog h1 {
    margin: 0;
    padding-left: 2px;
    font-size: 13px;
    line-height: 18px;
    color: #fff;
    background: #0a246a;
}

.dialog-body {
    display: flex;
    padding: 16px 15px 17px;
}

.options {
    width: 233px;
    margin-right: 11px;
}

fieldset {
    margin: 0 0 10px;
    padding: 2px 0 0 16px;
    border: 1px solid #808080;
    box-shadow: 1px 1px #fff, inset 1px 1px #fff;
}

fieldset:last-child {
    margin: 0;
    padding-top: 0;
}

legend {
    height: 16px;
    margin-left: -8px;
    padding: 0 5px;
}

.row {
    display: flex;
    align-items: center;
    height: 20px;
}

.row label {
    width: 72px;
    margin-right: 4px;
    text-align: right;
    white-space: nowrap;
}

.row input {
    width: 55px;
    height: 20px;
    margin-right: 10px;
    padding-left: 2px;
    font: 13px/16px "Noto Sans", sans-serif;
    background: #fff;
    border: 2px solid;
    border-color: #606060 #e8e4dc #e8e4dc #606060;
}

.row input::selection {
    color: #fff;
    background: #0a246a;
}

.check {
    display: flex;
    align-items: center;
    height: 20px;
    margin-bottom: 5px;
}

.check + .row {
    margin-top: 8px;
}

input[type="checkbox"] {
    appearance: none;
    width: 13px;
    height: 13px;
    margin-right: 5px;
    background: #fff;
    border: 2px solid;
    border-color: #606060 #e8e4dc #e8e4dc #606060;
}

input[type="checkbox"]:checked {
    background: #fff url("data:image/svg+xml,%3Csvg xmlns='http://www.w3.org/2000/svg' viewBox='0 0 9 9'%3E%3Cpath d='M1 4l2.500 2.500L8 2' fill='none' stroke='%23000' stroke-width='2'/%3E%3C/svg%3E") center / 9px 9px no-repeat;
}

input[type="range"] {
    appearance: none;
    display: block;
    width: 209px;
    height: 14px;
    margin: 0 0 6px -5px;
    background: linear-gradient(#444 0 1px, #000 1px 2px, #fff 2px 3px) 5px 2px / 199px 3px no-repeat;
}

input[type="range"]::-webkit-slider-thumb {
    appearance: none;
    width: 10px;
    height: 6px;
    background: url("data:image/svg+xml,%3Csvg xmlns='http://www.w3.org/2000/svg' viewBox='0 0 10 6'%3E%3Cpath d='M1 5.500h8l-4-5z' fill='%23eee' stroke='%23777'/%3E%3C/svg%3E");
}

.dialog-btns {
    display: flex;
    flex-direction: column;
    gap: 10px;
    padding-top: 6px;
}

.dialog-btns .push {
    width: 80px;
    height: 20px;
}

.dialog-btns .default {
    border-color: #000;
    box-shadow: inset 1px 1px #fff, inset -1px -1px #606060;
}

/* taskbar */
.taskbar {
    height: 30px;
    padding: 2px 0 2px 2px;
    display: flex;
    align-items: center;
    background: #d4d0c8;
    border-top: 1px solid #fff;
}

.start {
    width: 47px;
    height: 22px;
    gap: 2px;
    background: #d4d0c8;
    border: 1px solid;
    border-color: #fff #404040 #404040 #fff;
    box-shadow: inset -1px -1px #808080;
}

.quick {
    display: flex;
    align-items: center;
    gap: 7px;
    margin: 0 5px 0 8px;
}

.quick .chevrons {
    margin: 0 0 8px 2px;
}

.chevrons {
    font: bold 13px/16px "Noto Sans", sans-serif;
}

.task {
    width: 160px;
    height: 22px;
    padding-left: 4px;
    justify-content: flex-start;
    background: repeating-conic-gradient(#d4d0c8 0 25%, #fff 0 50%) 0 0 / 2px 2px;
    border: 1px solid;
    border-color: #404040 #fff #fff #404040;
}

.task-icon {
    width: 16px;
    height: 16px;
    margin-right: 4px;
    font: bold 10px/15px "Open Sans", sans-serif;
    color: #ffd890;
    background: linear-gradient(#a85000, #f08c10);
}

.tray-left {
    height: 24px;
    margin-left: auto;
    padding-right: 5px;
    display: flex;
    align-items: center;
    border-right: 1px solid #808080;
    box-shadow: 1px 0 #fff;
}

.tray {
    width: 38px;
    height: 24px;
    margin: 0 1px 0 6px;
    display: flex;
    align-items: center;
    justify-content: center;
    gap: 3px;
    border: 1px solid;
    border-color: #808080 #fff #fff #808080;
}
```
